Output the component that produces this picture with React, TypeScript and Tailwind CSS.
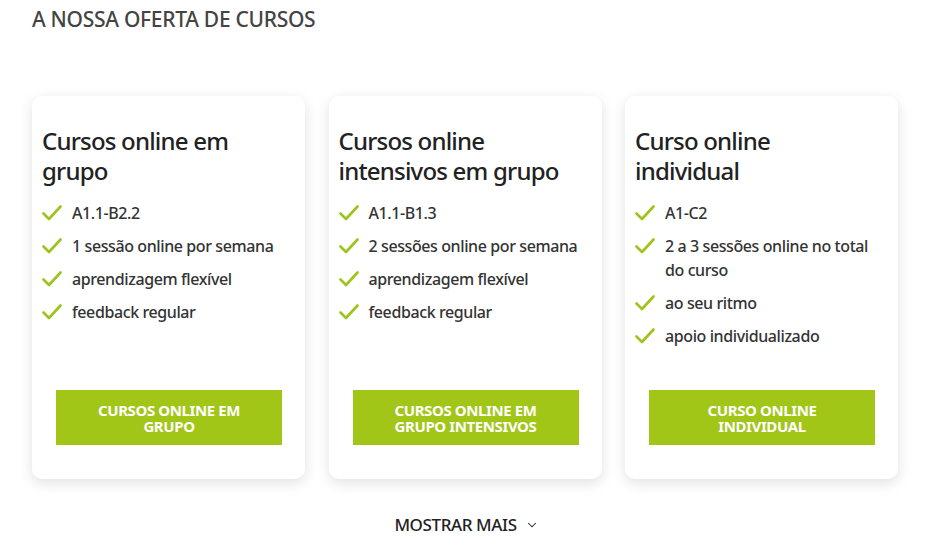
import { ChevronDown } from 'lucide-react';

interface Course {
  title: string;
  items: string[];
  button: string;
}

const courses: Course[] = [
  {
    title: 'Cursos online em grupo',
    items: ['A1.1-B2.2', '1 sessão online por semana', 'aprendizagem flexível', 'feedback regular'],
    button: 'Cursos online em grupo',
  },
  {
    title: 'Cursos online intensivos em grupo',
    items: ['A1.1-B1.3', '2 sessões online por semana', 'aprendizagem flexível', 'feedback regular'],
    button: 'Cursos online em grupo intensivos',
  },
  {
    title: 'Curso online individual',
    items: ['A1-C2', '2 a 3 sessões online no total do curso', 'ao seu ritmo', 'apoio individualizado'],
    button: 'Curso online individual',
  },
];

function Check() {
  return (
    <svg width="20" height="16" viewBox="0 0 20 16" className="shrink-0 mt-[4px]">
      <path d="M1.5 8.5 L7 14 L18.5 1.5" fill="none" stroke="#9dc41a" strokeWidth="2.6" strokeLinecap="round" strokeLinejoin="round" />
    </svg>
  );
}

function CourseCard({ course }: { course: Course }) {
  return (
    <div className="flex flex-col w-[273px] h-[383px] bg-white rounded-[10px] shadow-[0_4px_14px_rgba(0,0,0,0.12)] pl-[10px] pr-[22px] pt-[30px] pb-[34px]">
      <h3 className="text-[24px] leading-[30px] text-[#222] font-medium tracking-[-0.8px]">{course.title}</h3>
      <ul className="flex flex-col gap-[9px] mt-[15px]">
        {course.items.map((item) => (
          <li key={item} className="flex gap-[10px] text-[16px] leading-[24px] text-[#333] font-medium tracking-[-0.4px]">
            <Check />
            <span>{item}</span>
          </li>
        ))}
      </ul>
      <button className="mt-auto ml-[14px] w-[226px] h-[55px] bg-[#a1c617] text-white uppercase font-bold text-[15px] leading-[16px] px-[30px] tracking-[-0.4px]">
        {course.button}
      </button>
    </div>
  );
}

export default function App() {
  return (
    <div className="bg-white w-[933px] h-[555px] overflow-hidden pl-[32px] pt-[5px]" style={{ fontFamily: '"Noto Sans", "Open Sans", sans-serif' }}>
      <h2 className="text-[21px] leading-[28px] text-[#444] font-medium uppercase tracking-[-0.3px]">A nossa oferta de cursos</h2>
      <div className="flex gap-[23.5px] mt-[63px]">
        {courses.map((c) => (
          <CourseCard key={c.title} course={c} />
        ))}
      </div>
      <div className="flex justify-center items-center gap-[8px] mt-[36px] pr-[32px] text-[17px] leading-[20px] text-[#222] font-medium uppercase tracking-[-0.4px]">
        <span>Mostrar mais</span>
        <ChevronDown size={14} strokeWidth={1.8} />
      </div>
    </div>
  );
}
